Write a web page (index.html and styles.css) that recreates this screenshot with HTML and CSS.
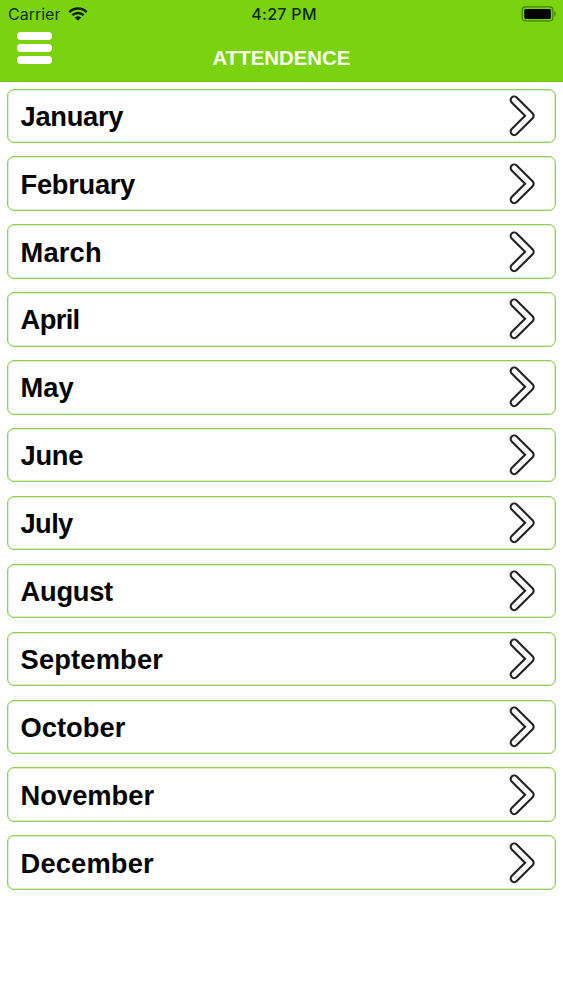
FILE: index.html
```html
<!DOCTYPE html>
<html lang="en">
<head>
<meta charset="utf-8">
<title>Attendence</title>
<link rel="stylesheet" href="styles.css">
</head>
<body>
<svg class="defs" width="0" height="0" aria-hidden="true">
  <symbol id="chevron" viewBox="0 0 28 42">
    <path class="chevron-outer" d="M5.2 5 21.1 20.7 5.2 36.6"/>
    <path class="chevron-inner" d="M5.2 5 21.1 20.7 5.2 36.6"/>
  </symbol>
</svg>
<header class="header">
  <div class="status">
    <div class="carrier"><span>Carrier</span>
      <svg class="wifi" viewBox="0 0 20 14">
        <path d="M1.3 5.2C6.2.4 13.8.4 18.7 5.2M4.3 8.2c3.3-3 8.1-3 11.4 0"/>
        <path class="wifi-dot" d="M6.6 10.5c2-1.7 4.8-1.7 6.8 0L10 13.8z"/>
      </svg>
    </div>
    <div class="time">4:27 PM</div>
    <svg class="battery" viewBox="0 0 36 16">
      <rect class="battery-case" x="1.2" y=".9" width="30.6" height="14" rx="3.2"/>
      <rect x="3.3" y="2.9" width="26.6" height="10" rx="1.3"/>
      <path class="battery-cap" d="M33.3 5.2c2 .8 2 4.6 0 5.4z"/>
    </svg>
  </div>
  <div class="nav">
    <button class="menu" aria-label="Menu"><i></i><i></i><i></i></button>
    <h1 class="title">ATTENDENCE</h1>
  </div>
</header>
<main class="list">
  <div class="row snug"><span>January</span><svg class="arrow"><use href="#chevron"/></svg></div>
  <div class="row snug"><span>February</span><svg class="arrow"><use href="#chevron"/></svg></div>
  <div class="row loose"><span>March</span><svg class="arrow"><use href="#chevron"/></svg></div>
  <div class="row tight"><span>April</span><svg class="arrow"><use href="#chevron"/></svg></div>
  <div class="row"><span>May</span><svg class="arrow"><use href="#chevron"/></svg></div>
  <div class="row snug"><span>June</span><svg class="arrow"><use href="#chevron"/></svg></div>
  <div class="row tight"><span>July</span><svg class="arrow"><use href="#chevron"/></svg></div>
  <div class="row snug"><span>August</span><svg class="arrow"><use href="#chevron"/></svg></div>
  <div class="row loose"><span>September</span><svg class="arrow"><use href="#chevron"/></svg></div>
  <div class="row"><span>October</span><svg class="arrow"><use href="#chevron"/></svg></div>
  <div class="row"><span>November</span><svg class="arrow"><use href="#chevron"/></svg></div>
  <div class="row loose"><span>December</span><svg class="arrow"><use href="#chevron"/></svg></div>
</main>
</body>
</html>
```
FILE: styles.css
```css
* { box-sizing: border-box; }
body {
  margin: 0;
  height: 1000px;
  overflow: hidden;
  background: #fefefe;
  color: #050505;
  font-family: "Liberation Sans", Arial, sans-serif;
}
.defs { display: block; }
.header {
  height: 81.5px;
  background: #7bd30f;
  border-bottom: 1px solid #75c01c;
}
.status {
  height: 29px;
  display: grid;
  grid-template-columns: 1fr auto 1fr;
  align-items: center;
  padding: 0 6px 2px 8px;
  font-family: Inter, sans-serif;
  font-size: 16px;
  color: #123006;
}
.carrier { display: flex; align-items: center; gap: 8px; }
.wifi { width: 20px; height: 14px; fill: none; stroke: #082004; stroke-width: 2.5; }
.wifi-dot { fill: #082004; stroke: none; }
.time { font-weight: 500; font-size: 16px; letter-spacing: .3px; color: #0b2904; padding-left: 3px; }
.battery { justify-self: end; width: 36px; height: 16px; }
.battery-case { fill: none; stroke: #3f7d0a; stroke-width: 1.2; }
.battery-cap { fill: #3f7d0a; }
.nav {
  display: grid;
  grid-template-columns: 52px 1fr 52px;
  align-items: start;
}
.menu {
  display: flex;
  flex-direction: column;
  gap: 4.5px;
  margin: 3.4px 0 0 17px;
  padding: 0;
  width: 35px;
  border: 0;
  background: none;
}
.menu i { height: 7.4px; width: 35px; border-radius: 3.7px; background: #fff; }
.title {
  margin: 17px 0 0;
  text-align: center;
  font-size: 20.4px;
  line-height: 24px;
  font-weight: 700;
  color: #fafff0;
}
.list {
  display: flex;
  flex-direction: column;
  gap: 13.4px;
  padding: 7px 7px 0;
}
.row {
  height: 54.5px;
  flex: none;
  display: flex;
  align-items: center;
  justify-content: space-between;
  padding: 0 18px 0 12.6px;
  border: 1px solid #92cf50;
  box-shadow: inset 0 0 0 .5px #b9df92;
  border-radius: 7px;
  font-size: 27.3px;
  font-weight: 700;
}
.snug { letter-spacing: -.3px; }
.tight { letter-spacing: -.65px; }
.loose { letter-spacing: .15px; }
.row span { line-height: 32px; padding-top: 2px; }
.arrow { width: 28px; height: 42px; }
.chevron-outer, .chevron-inner { fill: none; stroke-linecap: round; stroke-linejoin: round; }
.chevron-outer { stroke: #222; stroke-width: 9.2; }
.chevron-inner { stroke: #fefefe; stroke-width: 5; }
```
